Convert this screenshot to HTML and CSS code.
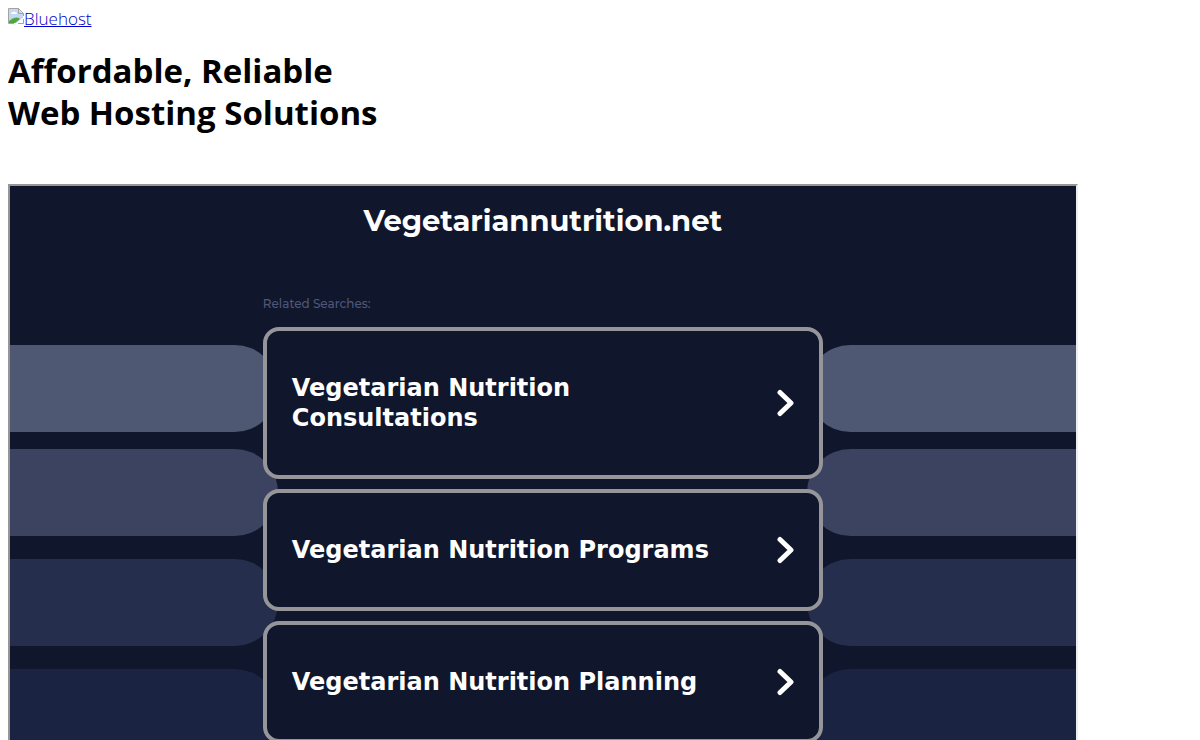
FILE: index.html
```
<!DOCTYPE html>
<html lang="en">
<head>
  <meta charset="UTF-8">
  <title>Bluehost</title>
  <link rel="stylesheet" href="styles.css">
</head>
<body>

  <a class="logo" href="#">
    <svg width="16" height="16" viewBox="0 0 16 16" aria-hidden="true">
      <path d="M1 1h9l5 5v4L9 15H1z" fill="#c6d7f5"/>
      <path d="M3 6q0-2 2-2 1-1 2 0 2 0 2 2z" fill="#fff"/>
      <path d="M1 15v-2q5-5 10-3l1 1-5 4z" fill="#4fa83d"/>
      <path d="M16 9v7H7z" fill="#fff"/>
      <path d="M.5 15.5V.5h10l5 5V8M10.5.5v5h5M.5 15.5H6M15.5 11v4.5H10" fill="none" stroke="#a3a3a3"/>
    </svg><span>Bluehost</span>
  </a>

  <h1>Affordable, Reliable<br>Web Hosting Solutions</h1>

  <div class="frame">
    <div class="bands">
      <div class="band band1"><span></span><span></span></div>
      <div class="band band2"><span></span><span></span></div>
      <div class="band band3"><span></span><span></span></div>
      <div class="band band4"><span></span><span></span></div>
    </div>

    <div class="content">
      <h2>Vegetariannutrition.net</h2>
      <p class="related">Related Searches:</p>
      <a class="card" href="#">
        <span>Vegetarian Nutrition Consultations</span>
        <svg width="18" height="28" viewBox="0 0 18 28" aria-hidden="true"><path d="M3 3.500 14 14 3 24.500"/></svg>
      </a>
      <a class="card" href="#">
        <span>Vegetarian Nutrition Programs</span>
        <svg width="18" height="28" viewBox="0 0 18 28" aria-hidden="true"><path d="M3 3.500 14 14 3 24.500"/></svg>
      </a>
      <a class="card" href="#">
        <span>Vegetarian Nutrition Planning</span>
        <svg width="18" height="28" viewBox="0 0 18 28" aria-hidden="true"><path d="M3 3.500 14 14 3 24.500"/></svg>
      </a>
    </div>
  </div>

</body>
</html>
```
FILE: styles.css
```
body {
  font-family: "Segoe UI", "Open Sans", sans-serif;
  background: #fff;
  color: #000;
  margin: 8px;
}

.logo {
  display: flex;
  align-items: flex-start;
  color: #0000cc;
  font-size: 17px;
  font-weight: 300;
  line-height: 22px;
  text-decoration: none;
}

.logo span {
  text-decoration: underline;
}

h1 {
  font-size: 33px;
  line-height: 42px;
  margin: 20px 0 50px;
}

.frame {
  display: grid;
  width: 90%;
  border: 2px solid;
  border-color: #969696 #eeeef2 #eeeef2 #969696;
  background: #10162b;
}

/* both layers share the one grid cell */
.bands,
.content {
  grid-area: 1 / 1;
}

.bands {
  padding-top: 159px;
}

.band {
  display: flex;
  gap: 529px;
  height: 87px;
  margin-bottom: 23px;
}

.band span {
  flex: 1;
  background: #4f5872;
  border-radius: 0 44px 44px 0;
}

.band span:last-child {
  border-radius: 44px 0 0 44px;
}

.band1 {
  margin-bottom: 17px;
}

.band2 span {
  background: #3b4361;
}

.band3 span {
  background: #262e4d;
}

.band4 span {
  background: #1b2343;
}

.content {
  width: 560px;
  margin: 0 auto;
}

h2 {
  font-family: Montserrat, "Noto Sans", sans-serif;
  font-size: 29px;
  line-height: 38px;
  color: #fff;
  text-align: center;
  margin: 16px 0 56px;
}

.related {
  font-family: Montserrat, Inter, sans-serif;
  font-size: 12px;
  font-weight: 500;
  line-height: 16px;
  color: #4f5678;
  margin: 0 0 15px;
}

.card {
  display: flex;
  justify-content: space-between;
  align-items: center;
  box-sizing: border-box;
  min-height: 122px;
  padding: 42px 24px 42px 25px;
  margin-bottom: 10px;
  border: 4px solid #96969a;
  border-radius: 16px;
  background: #10162b;
  color: #fff;
  font-family: Verdana, "DejaVu Sans", sans-serif;
  font-size: 24px;
  font-weight: bold;
  line-height: 30px;
  text-decoration: none;
}

.card span {
  max-width: 420px;
}

.card path {
  fill: none;
  stroke: #fff;
  stroke-width: 5;
  stroke-linecap: round;
  stroke-linejoin: round;
}
```
